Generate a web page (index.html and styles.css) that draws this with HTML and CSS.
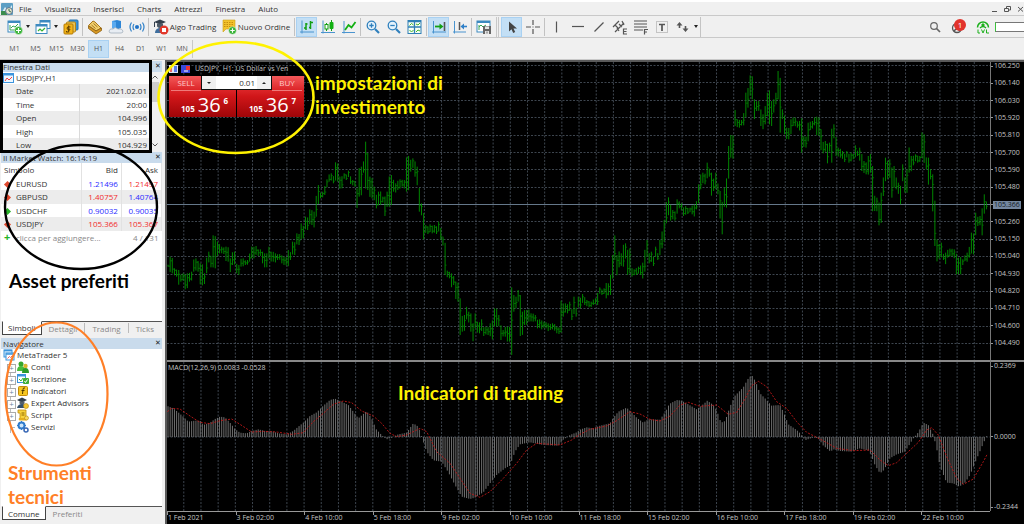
FILE: index.html
```html
<!DOCTYPE html>
<html lang="it">
<head>
<meta charset="utf-8">
<title>MetaTrader 5</title>
<link rel="stylesheet" href="styles.css">
</head>
<body>
<header class="menubar">
  <svg class="app-logo" width="12" height="12" viewBox="0 0 12 12"><rect width="12" height="12" rx="1" fill="#5d9fc4"/><path d="M1 9l3-5 3 3 4-5v8z" fill="#d9edf4"/><path d="M0 8h6v4H0z" fill="#3b8c4c"/><circle cx="8" cy="8" r="3.4" fill="#e9e4cd" stroke="#55708a"/><path d="M8 6v2l2 1" fill="none" stroke="#375"/></svg>
  <nav class="menus">
    <button>File</button><button>Visualizza</button><button>Inserisci</button><button>Charts</button><button>Attrezzi</button><button>Finestra</button><button>Aiuto</button>
  </nav>
  <div class="window-controls">
    <button aria-label="Riduci"><svg width="7" height="8" viewBox="0 0 7 8"><path d="M1 6.500h5" stroke="#555" fill="none"/></svg></button>
    <button aria-label="Ripristina"><svg width="7" height="8" viewBox="0 0 7 8"><path d="M.5 3.500h4v3h-4zM2.500 3V1.500h4v3.500H5" stroke="#555" fill="none"/></svg></button>
    <button aria-label="Chiudi"><svg width="7" height="8" viewBox="0 0 7 8"><path d="M1 2l5 4.500M6 2L1 6.500" stroke="#555" fill="none"/></svg></button>
  </div>
</header>

<div class="toolbar">
  <button class="tool drop" aria-label="Nuovo grafico"><svg width="16" height="16" viewBox="0 0 16 16"><rect x="1" y="2" width="12" height="11" fill="#fff" stroke="#3c8ac0"/><path d="M1 3h12" stroke="#3c8ac0" stroke-width="2"/><path d="M3 6v5h7M4 9l2-2 2 1 3-3" fill="none" stroke="#37a556"/><circle cx="11.500" cy="11.500" r="4" fill="#35b234" stroke="#dff4df" stroke-width=".6"/><path d="M11.500 9v5M9 11.500h5" stroke="#fff" stroke-width="1.200"/></svg><i class="caret"></i></button>
  <button class="tool drop" aria-label="Profili"><svg width="16" height="16" viewBox="0 0 16 16"><rect x="5" y="1.500" width="10" height="8" fill="#fff" stroke="#3c8ac0"/><path d="M5 2.500h10" stroke="#3c8ac0" stroke-width="2"/><rect x="1" y="5.500" width="11" height="9" fill="#fff" stroke="#3c8ac0"/><path d="M1 6.500h11" stroke="#3c8ac0" stroke-width="2"/><path d="M3 12l2-2 2 2 3-3" fill="none" stroke="#35b234" stroke-width="1.200"/></svg><i class="caret"></i></button>
  <button class="tool" aria-label="Simboli"><svg width="16" height="16" viewBox="0 0 16 16"><rect x="6" y="1" width="9" height="10" rx="1" fill="#3b93d8" stroke="#2470ac"/><rect x="3.500" y="3" width="9" height="10" rx="1" fill="#e9c456" stroke="#b88512"/><rect x="1" y="5" width="9" height="10" rx="1" fill="#f2b419" stroke="#b37a07"/><path d="M7.500 8Q4 7 4 9t2 1.200T5.500 12 3.500 12M5.700 6.500v7" fill="none" stroke="#5e3d00"/></svg></button>
  <i class="sep"></i>
  <button class="tool" aria-label="Strategia"><svg width="16" height="16" viewBox="0 0 16 16"><path d="M1.500 6.500L6 2l2 1 6 6-5 3z" fill="#f1cf6c" stroke="#a8761a"/><path d="M1.500 7v2.500L9 15l5.500-3.500V9L9 12z" fill="#d99a24" stroke="#8b5e12" stroke-width=".8"/><path d="M4.500 6l4 3.500M6.500 4.500l4 3.500" stroke="#8b5e12" stroke-width=".8"/></svg></button>
  <button class="tool" aria-label="Cloud"><svg width="16" height="16" viewBox="0 0 16 16"><path d="M4 2l5-1 4 1v7l-5 2-4-2z" fill="#2e86d6"/><path d="M4 2l4 1v8l-4-2z" fill="#5aaaf0"/><path d="M1 12q1-3 4-2 2-3 5 0 4-1 5 2 0 2-2 2H3q-2 0-2-2z" fill="#e8edf3" stroke="#9aa8b5" stroke-width=".7"/></svg></button>
  <button class="tool" aria-label="Segnali"><svg width="16" height="16" viewBox="0 0 16 16" fill="none" stroke="#2f80c8" stroke-width="1.200"><circle cx="8" cy="8" r="1.500" fill="#1b64c8"/><path d="M5 5q-2 3 0 6M2.500 3.500q-3 4.500 0 9M11 5q2 3 0 6M13.500 3.500q3 4.500 0 9"/></svg></button>
  <i class="sep"></i>
  <button class="tool wide algo"><svg width="16" height="16" viewBox="0 0 16 16"><path d="M1 3l6-2.500L13 3 7 5.500z" fill="#333f4c"/><path d="M4 4.500h6v3q-3 3-6 0z" fill="#4e5b68"/><path d="M1.500 3v5" stroke="#333f4c"/><path d="M2 14q0-4 4-5h4v5z" fill="#3f6f9e"/><circle cx="11" cy="11" r="4.500" fill="#e2392b"/><rect x="9" y="9" width="4" height="4" fill="#fff"/></svg>Algo Trading</button>
  <button class="tool wide order"><svg width="15" height="16" viewBox="0 0 15 16"><path d="M1 1h12v9H4l-3 3z" fill="#f3c32c" stroke="#caa01c" stroke-width=".6"/><path d="M2 3.500h10M2 5.500h10M2 7.500h10" stroke="#c68e0e" stroke-dasharray="1.500 1"/><circle cx="10.500" cy="11.500" r="3.800" fill="#35b234" stroke="#e8f6e8" stroke-width=".5"/><path d="M10.500 9.300v4.400M8.300 11.500h4.400" stroke="#fff" stroke-width="1.200"/></svg>Nuovo Ordine</button>
  <i class="sep"></i>
  <button class="tool on" aria-label="Barre"><svg width="16" height="16" viewBox="0 0 16 16" fill="none"><path d="M3 1.500v13M1 13h14" stroke="#4a94cf"/><path d="M7 4v7M5 9h2M7 5h1.500M11.500 2v8M10 8.500h1.500M11.500 3.500H14" stroke="#12a012" stroke-width="1.500"/></svg></button>
  <button class="tool" aria-label="Candele"><svg width="16" height="16" viewBox="0 0 16 16" fill="none"><path d="M3 1.500v13M1 13.500h14" stroke="#4a94cf"/><path d="M6.500 4v8M11.500 1v11" stroke="#12a012"/><rect x="5" y="5.500" width="3" height="4.500" fill="#fff" stroke="#12a012"/><rect x="9.500" y="3" width="4" height="7" rx="1" fill="#12b012"/></svg></button>
  <button class="tool" aria-label="Linea"><svg width="16" height="16" viewBox="0 0 16 16" fill="none"><path d="M3 2v12.500M1 13.500h13" stroke="#4a94cf"/><path d="M4 11l3.500-5 3 2.500 4-5.500" stroke="#12b012" stroke-width="1.800"/></svg></button>
  <i class="sep"></i>
  <button class="tool" aria-label="Ingrandisci"><svg width="16" height="16" viewBox="0 0 16 16" fill="none" stroke="#2f80bd"><circle cx="6.500" cy="6.500" r="4.300" fill="#e4f2fc" stroke-width="1.300"/><path d="M10 10l4 4" stroke-width="2.200"/><path d="M4.300 6.500h4.400M6.500 4.300v4.400" stroke-width="1.300"/></svg></button>
  <button class="tool" aria-label="Riduci zoom"><svg width="16" height="16" viewBox="0 0 16 16" fill="none" stroke="#2f80bd"><circle cx="6.500" cy="6.500" r="4.300" fill="#e4f2fc" stroke-width="1.300"/><path d="M10 10l4 4" stroke-width="2.200"/><path d="M4.300 6.500h4.400" stroke-width="1.300"/></svg></button>
  <button class="tool" aria-label="Affianca"><svg width="16" height="16" viewBox="0 0 16 16"><rect x="1" y="1.500" width="13" height="13" fill="#f8fff4" stroke="#2f7fb5"/><path d="M7.500 1v13M1 8h13M1 2.500h13" stroke="#2f7fb5" stroke-width="1.300"/><path d="M2.500 6.500l2-2 2 1.500M9 5l2 1 2-2M2.500 11l2 2 2-2M9 13l2-2 2 1" fill="none" stroke="#42b52c"/></svg></button>
  <i class="sep"></i>
  <button class="tool on" aria-label="Scorrimento automatico"><svg width="16" height="16" viewBox="0 0 16 16" fill="none"><path d="M2.500 2v12.500M1 13h14" stroke="#4a94cf" /><path d="M4 7.500h6" stroke="#12a012" stroke-width="1.800"/><path d="M8.500 4.500l4 3-4 3z" fill="#12a012"/><path d="M13.500 3v9" stroke="#555" stroke-width="1.600"/></svg></button>
  <button class="tool" aria-label="Spostamento grafico"><svg width="16" height="16" viewBox="0 0 16 16" fill="none"><path d="M2.500 2v12.500M1 13h13" stroke="#4a94cf"/><path d="M7.500 3v8" stroke="#555" stroke-width="1.500"/><path d="M11 7.500h4" stroke="#2f80c8" stroke-width="1.600"/><path d="M12 4.500l-3.500 3 3.500 3z" fill="#2f80c8"/></svg></button>
  <i class="sep"></i>
  <button class="tool" aria-label="Modelli"><svg width="16" height="16" viewBox="0 0 16 16"><rect x="1" y="2" width="13" height="11" fill="#fff" stroke="#3c8ac0"/><path d="M1 3h13" stroke="#3c8ac0" stroke-width="2"/><path d="M3 6v5M3 8l2-2 2 2 3-2" fill="none" stroke="#37a556"/><rect x="7" y="7" width="8" height="8" fill="#666"/><path d="M9 7.500h4v2.500H9zM9 15v-3h4v3" fill="#e5e5e5"/><path d="M11 12.500v2" stroke="#666"/></svg></button>
  <i class="grip"></i>
  <button class="tool on" aria-label="Cursore"><svg width="16" height="16" viewBox="0 0 16 16"><path d="M5 2.500v10l2.500-2.200 1.700 3.700 2-.9-1.700-3.600H13z" fill="#444"/></svg></button>
  <button class="tool" aria-label="Croce"><svg width="16" height="16" viewBox="0 0 16 16"><path d="M8 1v5M8 10v5M1 8h5M10 8h5M7.500 8h1" stroke="#555" stroke-width="1.200"/></svg></button>
  <i class="sep"></i>
  <button class="tool" aria-label="Linea verticale"><svg width="16" height="16" viewBox="0 0 16 16"><path d="M7.500 2.500v11" stroke="#555" stroke-width="1.200"/></svg></button>
  <button class="tool" aria-label="Linea orizzontale"><svg width="16" height="16" viewBox="0 0 16 16"><path d="M2 7.500h12" stroke="#555" stroke-width="1.200"/></svg></button>
  <button class="tool" aria-label="Linea di tendenza"><svg width="16" height="16" viewBox="0 0 16 16"><path d="M3.500 12.500l9-9" stroke="#555" stroke-width="1.300"/></svg></button>
  <button class="tool" aria-label="Canale"><svg width="16" height="16" viewBox="0 0 16 16" fill="none" stroke="#555" stroke-width="1.200"><path d="M1 8l6-6M3 13l9-9M3 6l3 3M7 5l3 3M5 9l2 3M10 2l2 4M15 10h-3.500v5H15M12 12.500h2.500"/></svg></button>
  <button class="tool" aria-label="Fibonacci"><svg width="16" height="16" viewBox="0 0 16 16" fill="none" stroke="#555" stroke-width="1.200"><path d="M1 2h13M1 5h13M1 8h13M1 11h9M11.500 15.500v-5H15M11.500 13H14"/></svg></button>
  <button class="tool" aria-label="Testo"><svg width="16" height="16" viewBox="0 0 16 16" fill="none" stroke="#555"><rect x="2.500" y="2.500" width="11" height="11" stroke="#999" stroke-dasharray="1 1"/><path d="M5 5.500h6M8 5.500V12" stroke-width="1.700"/></svg></button>
  <button class="tool drop last" aria-label="Frecce"><svg width="16" height="16" viewBox="0 0 16 16" fill="#555"><path d="M4.500 3l3 3.500H5.300V9H3.700V6.500H1.500zM10.500 13l3-3.500h-2.200V7H9.700v2.500H7.500z"/></svg><i class="caret"></i></button>
  <div class="status">
    <button aria-label="Cerca"><svg width="14" height="16" viewBox="0 0 14 16" fill="none" stroke="#666"><circle cx="6" cy="7" r="3.300" stroke-width="1.200"/><path d="M8.500 9.500l3.500 3.500" stroke-width="1.700"/></svg></button>
    <button class="user" aria-label="Notifiche"><svg width="12" height="14" viewBox="0 0 12 14" fill="none" stroke="#555" stroke-width="1.300"><circle cx="6" cy="8" r="4.500"/><path d="M3 11q3-4 6 0"/><circle cx="6" cy="6.500" r="1.500"/></svg><span class="badge">1</span></button>
    <button aria-label="Livello"><svg width="14" height="16" viewBox="0 0 14 16" fill="none" stroke="#1cb01c" stroke-width="1.500"><path d="M1.500 8.500a5.500 5.500 0 1 1 11 0"/><path d="M7 4l2 2-2 2-2-2z" fill="#1cb01c" stroke="none"/><path d="M4 9q3-3 6 0" stroke-width="1.300"/><path d="M2 10.500V14h2M5.500 10.500L7 14l1.500-3.500M10.500 10.500V14H13" stroke-width="1"/></svg></button>
    <span class="level"></span>
  </div>
</div>

<div class="timeframes">
  <button>M1</button><button>M5</button><button>M15</button><button>M30</button><button class="on">H1</button><button>H4</button><button>D1</button><button>W1</button><button>MN</button>
</div>

<main class="workspace">
  <aside class="sidebar">
    <section class="panel data-window">
      <h2 class="caption"><span>Finestra Dati</span><button aria-label="Chiudi">✕</button></h2>
      <div class="data-scroll">
        <div class="data-body">
          <p class="symbol"><svg width="11" height="11" viewBox="0 0 11 11"><rect x=".5" y=".5" width="10" height="9" fill="#eef7ff" stroke="#3b94dc"/><path d="M0 1.500h11" stroke="#3b94dc" stroke-width="2"/><path d="M2 8l2-3 2 2 3-3" stroke="#e44" fill="none"/></svg>USDJPY,H1</p>
          <table class="grid">
            <tr><th>Date</th><td>2021.02.01</td></tr>
            <tr><th>Time</th><td>20:00</td></tr>
            <tr><th>Open</th><td>104.996</td></tr>
            <tr><th>High</th><td>105.035</td></tr>
            <tr><th>Low</th><td>104.929</td></tr>
          </table>
        </div>
        <div class="scrollbar"><svg width="6" height="4" viewBox="0 0 6 4"><path d="M.5 3.500L3 1l2.500 2.500" fill="none" stroke="#555"/></svg><i></i><svg width="6" height="4" viewBox="0 0 6 4"><path d="M.5.5L3 3 5.500.5" fill="none" stroke="#555"/></svg></div>
      </div>
    </section>

    <section class="panel market">
      <h2 class="caption"><span>Il Market Watch: 16:14:19</span><button aria-label="Chiudi">✕</button></h2>
      <div class="content">
        <table class="quotes">
          <thead><tr><th>Simbolo</th><th>Bid</th><th>Ask</th></tr></thead>
          <tbody>
            <tr><th><i class="dir down"></i>EURUSD</th><td class="up">1.21496</td><td class="fall">1.21497</td></tr>
            <tr><th><i class="dir down"></i>GBPUSD</th><td class="fall">1.40757</td><td class="up">1.40764</td></tr>
            <tr><th><i class="dir rise"></i>USDCHF</th><td class="up">0.90032</td><td class="up">0.90035</td></tr>
            <tr><th><i class="dir down"></i>USDJPY</th><td class="fall">105.366</td><td class="fall">105.367</td></tr>
            <tr class="add"><th colspan="2"><b>+</b>clicca per aggiungere...</th><td>4 / 131</td></tr>
          </tbody>
        </table>
      </div>
      <div class="tabs"><button class="on">Simboli</button><button>Dettagli</button><button>Trading</button><button>Ticks</button></div>
    </section>

    <section class="panel navigator">
      <h2 class="caption"><span>Navigatore</span><button aria-label="Chiudi">✕</button></h2>
      <div class="content">
        <ul class="tree">
          <li class="root"><svg width="12" height="12" viewBox="0 0 12 12"><rect x="1" y="1" width="8" height="7" fill="#cfe8fb" stroke="#3b94dc"/><rect x="3" y="4" width="8" height="7" fill="#fff" stroke="#3b94dc"/><path d="M3 5h8M1 1.500h8" stroke="#3b94dc" stroke-width="1.500"/><path d="M4.500 9.500l2-2 1 1 2-2" stroke="#e66" fill="none"/></svg>MetaTrader 5</li>
          <li><i class="plus"></i><svg width="12" height="12" viewBox="0 0 12 12"><circle cx="4" cy="3" r="2.500" fill="#35a62c"/><path d="M0 10q0-5 4-5t4 5z" fill="#48bd3c"/><circle cx="8.500" cy="5" r="2.200" fill="#d9b42d"/><path d="M5 12q0-5 3.500-5T12 12z" fill="#2c9a28"/></svg>Conti</li>
          <li><i class="plus"></i><svg width="12" height="12" viewBox="0 0 12 12"><rect x=".5" y="1.500" width="8" height="8" fill="#fff" stroke="#3b94dc"/><path d="M0 2.500h9" stroke="#3b94dc" stroke-width="2"/><path d="M2 6l2 2 2-3" fill="none" stroke="#3b3"/><rect x="6" y="5" width="6" height="6" rx="1" fill="#41ad36"/><path d="M7.500 8l1 1.500 2-3" fill="none" stroke="#fff"/></svg>Iscrizione</li>
          <li><i class="plus"></i><svg width="12" height="12" viewBox="0 0 12 12"><rect x="1.500" y="1.500" width="9" height="9" rx="1" fill="#f6c620" stroke="#c28a08"/><path d="M8 3q-2-.8-2 1.500L5.500 9M4.500 5.500h3" fill="none" stroke="#503a00"/></svg>Indicatori</li>
          <li><i class="plus"></i><svg width="12" height="12" viewBox="0 0 12 12"><path d="M0 3l5-2.500L10 3 5 5.500z" fill="#33404d"/><path d="M2.500 4.500h5v2q-2.500 2-5 0z" fill="#55606b"/><path d="M0 11q1-4 5-4t4 4z" fill="#33506d"/><circle cx="9" cy="9" r="2.500" fill="#f3c632" stroke="#b68510" stroke-width=".6"/></svg>Expert Advisors</li>
          <li><i class="plus"></i><svg width="12" height="12" viewBox="0 0 12 12"><path d="M1 1h8v9H3V4H1z" fill="#f8d33b" stroke="#be8e0c" stroke-width=".8"/><path d="M4.500 4h3M4.500 6h3" stroke="#8d6600"/><path d="M2 9h8q1 2-1 2.500H3Q1 11 2 9z" fill="#e4ae1c"/><circle cx="9.500" cy="9" r="2" fill="#f9db62" stroke="#b68510" stroke-width=".6"/></svg>Script</li>
          <li class="leaf"><i class="plus"></i><svg width="12" height="12" viewBox="0 0 12 12"><circle cx="4.500" cy="4.500" r="3" fill="#cde5fa" stroke="#2f7bcb" stroke-width="2"/><path d="M4.500 0v9M0 4.500h9" stroke="#2f7bcb" stroke-dasharray="1.500 6"/><circle cx="9" cy="9" r="2" fill="#fff" stroke="#3767b5" stroke-width="1.500"/></svg>Servizi</li>
        </ul>
      </div>
      <div class="tabs"><button class="on">Comune</button><button>Preferiti</button></div>
    </section>
  </aside>

  <section class="chart">
    <svg id="price" class="plot" viewBox="167 62 823 298" preserveAspectRatio="none"></svg>
    <div class="axis price-axis">
      <span>106.250</span><span>106.140</span><span>106.030</span><span>105.920</span><span>105.810</span><span>105.700</span><span>105.590</span><span>105.480</span><span class="now">105.366</span><span>105.260</span><span>105.150</span><span>105.040</span><span>104.930</span><span>104.820</span><span>104.710</span><span>104.600</span><span>104.490</span>
    </div>
    <svg id="macd" class="plot lower" viewBox="167 362 823 149" preserveAspectRatio="none"></svg>
    <div class="axis macd-axis lower"><span>0.2369</span><span>0.0000</span><span>-0.2344</span></div>
    <div class="times">
      <span>1 Feb 2021</span><span>3 Feb 02:00</span><span>4 Feb 10:00</span><span>5 Feb 18:00</span><span>9 Feb 02:00</span><span>10 Feb 10:00</span><span>11 Feb 18:00</span><span>15 Feb 02:00</span><span>16 Feb 10:00</span><span>17 Feb 18:00</span><span>19 Feb 02:00</span><span>22 Feb 10:00</span>
    </div>
    <p class="macd-label">MACD(12,26,9) 0.0083 -0.0528</p>
    <div class="ticket">
      <p class="ticket-title"><svg width="22" height="9" viewBox="0 0 22 9"><rect x="0" y="0" width="9" height="8" fill="#dfe4f5"/><path d="M1 1h2v6H1z" fill="#e66"/><path d="M5 1h3v6H5z" fill="#5a7be8"/><rect x="12" y="0" width="9" height="8" fill="#3a49dc"/><path d="M17 1h4v4h-4z" fill="#e33"/><path d="M15 6h4" stroke="#fff"/></svg>USDJPY, H1: US Dollar vs Yen</p>
      <div class="deal">
        <button class="side sell"><span class="name">SELL</span><span class="quote"><b>105</b><em>36</em><sup>6</sup></span></button>
        <button class="side buy"><span class="name">BUY</span><span class="quote"><b>105</b><em>36</em><sup>7</sup></span></button>
        <div class="volume"><button aria-label="Meno"><i class="tri"></i></button><input aria-label="Volume" value="0.01"><button aria-label="Più"><i class="tri upward"></i></button></div>
      </div>
    </div>
  </section>
</main>

<div class="notes">
  <svg width="460" height="524" viewBox="0 0 460 524" fill="none">
    <rect x="1.500" y="61.500" width="149" height="90" stroke="#000" stroke-width="3"/>
    <ellipse cx="81" cy="207" rx="76" ry="62" stroke="#000" stroke-width="2.400"/>
    <ellipse cx="56.500" cy="394" rx="51" ry="71.500" stroke="#ff7f27" stroke-width="2.200"/>
    <ellipse cx="236" cy="97.500" rx="77.500" ry="55.500" stroke="#fff200" stroke-width="2.600"/>
  </svg>
  <p class="note invest">impostazioni di<br>investimento</p>
  <p class="note assets">Asset preferiti</p>
  <p class="note tools">Strumenti<br>tecnici</p>
  <p class="note indicators">Indicatori di trading</p>
</div>
<script src="chart.js"></script>
</body>
</html>
```
FILE: styles.css
```css
* { box-sizing: border-box; }
body {
  margin: 0;
  height: 100vh;
  display: flex;
  flex-direction: column;
  overflow: hidden;
  position: relative;
  background: #f0f0f0;
  color: #333;
  font: 8px/12px "Open Sans", "Noto Sans", sans-serif;
}
button { margin: 0; padding: 0; border: 0; background: none; color: inherit; font: inherit; white-space: nowrap; }
p, h2, ul { margin: 0; padding: 0; font: inherit; list-style: none; }
svg { display: block; flex: none; }
table { border-collapse: collapse; width: 100%; }
th { font-weight: normal; text-align: left; }

.menubar { display: flex; align-items: center; height: 16px; border-top: 2px solid #fff; border-bottom: 1px solid #c9c9c9; padding-left: 1px; }
.menus { display: flex; gap: 13px; margin-left: 6px; }
.window-controls { display: flex; gap: 6px; margin-left: auto; }

.toolbar { display: flex; align-items: center; height: 22px; padding-left: 4px; border-bottom: 1px solid #c9c9c9; }
.tool { width: 21px; height: 20px; display: flex; align-items: center; justify-content: center; }
.tool.on, .timeframes .on { background: #c3dff5; outline: 1px solid #a9d1f2; outline-offset: -1px; }
.tool.drop { width: 28px; gap: 3px; }
.tool.last { width: 29px; border-right: 1px solid #c4c4c4; }
.tool.wide { gap: 1px; }
.tool.algo { width: 69px; }
.tool.order { width: 74px; }
.caret { border: 2px solid transparent; border-top: 3px solid #222; border-bottom: 0; }
.sep { width: 1px; height: 18px; margin: 0 1px; background: #c2c2c2; }
.grip { width: 3px; height: 20px; margin: 0 2px; border: 1px solid #c8c8c8; border-width: 0 1px; }
.status { display: flex; align-items: center; gap: 9px; margin-left: auto; }
.user { position: relative; width: 16px; }
.badge { position: absolute; left: 3px; top: -1px; width: 12px; height: 12px; border-radius: 50%; background: #e2332b; color: #fff; }
.level { width: 29px; height: 10px; background: #fff; border: 1px solid #777; border-left-color: #3cc23c; border-right: 0; margin-left: -4px; }

.timeframes { display: flex; height: 22px; padding: 2px 0 1px 4px; border-bottom: 1px solid #c9c9c9; font-size: 7px; color: #555; }
.timeframes button { width: 21px; }
.timeframes button:last-child { border-right: 1px solid #c9c9c9; }

.workspace { flex: 1; min-height: 0; display: flex; }
.sidebar { width: 165px; display: flex; flex-direction: column; padding: 0 3px 4px 1px; }
.panel { display: flex; flex-direction: column; }
.caption { display: flex; justify-content: space-between; align-items: center; height: 11px; padding-left: 2px; line-height: 11px; background: #c9dbec; }
.caption button { width: 8px; font: 7px/11px "DejaVu Sans", sans-serif; color: #222; }

.data-window { height: 92px; padding-top: 1px; }
.data-scroll { flex: 1; min-height: 0; display: flex; overflow: hidden; background: #fff; }
.data-body { flex: 1; }
.symbol { display: flex; align-items: center; gap: 2px; height: 12px; padding-left: 2px; }
.grid tr { height: 14px; }
.grid tr:nth-child(even) { height: 13px; }
.grid tr:nth-child(odd), .quotes tbody tr:nth-child(even) { background: #ececec; }
.grid th, .grid td { padding: 0 4px 0 14px; border-left: 1px solid #dadada; }
.grid th { width: 53%; }
.grid td { padding: 0 2px 0 0; text-align: right; }
.scrollbar { width: 13px; display: flex; flex-direction: column; align-items: center; padding: 3px 2px 5px 0; background: #f0f0f0; }
.scrollbar i { width: 8px; height: 20px; margin: 3px 0 auto; background: #cdcdcd; }

.market, .navigator { flex: 1; min-height: 0; }
.content { flex: 1; min-height: 0; background: #fff; }
.quotes { table-layout: fixed; }
.quotes tr { height: 13px; }
.quotes tbody tr:nth-child(even) { height: 14px; }
.quotes thead th { height: 14px; }
.quotes th, .quotes td { padding: 0 3px; white-space: nowrap; border-right: 1px solid #e2e2e2; }
.quotes thead th:first-child { width: 50%; }
.quotes thead th:nth-child(n+2), .quotes td { text-align: right; }
.quotes .up { color: #2b2bff; }
.quotes .fall { color: #f22b2b; }
.quotes .add { background: #fff; color: #888; }
.quotes .add b { display: inline-block; width: 12px; color: #25b325; font-size: 11px; line-height: 8px; }
.quotes .add th, .quotes .add td { border: 0; text-align: right; }
.quotes .add th { text-align: left; }
.dir { display: inline-block; width: 5px; height: 5px; margin: 0 6px 0 1px; transform: rotate(45deg); background: #e0492e; }
.dir.rise { background: #29b329; }

.tabs { display: flex; height: 14px; margin-left: 1px; border-top: 1px solid #555; color: #888; }
.tabs button { padding: 0 7px; border-right: 1px solid #bbb; margin: 1px 0 2px; line-height: 11px; }
.tabs button:last-child { border-right-color: transparent; }
.tabs .on { margin: -1px 0 0; padding: 0 5px; border: 1px solid #444; border-top-color: #fff; background: #fff; color: #333; }
.navigator { margin-top: 3px; }

.tree { padding: 0 2px; }
.tree li { display: flex; align-items: center; gap: 2px; height: 12px; padding-left: 4px; }
.tree .root { padding-left: 0; }
.plus { position: relative; width: 8px; height: 12px; flex: none; background: linear-gradient(#bbb, #bbb) 3px 0/1px 12px no-repeat, linear-gradient(#bbb, #bbb) 3px 6px/5px 1px no-repeat; }
.plus::before { content: "+"; position: absolute; left: 0; top: 3px; width: 7px; height: 7px; border: 1px solid #aaa; background: #fff; color: #6b7fa0; font: 6px/5px "DejaVu Sans", sans-serif; text-align: center; }
.leaf .plus::before { display: none; }

.chart { flex: 1; min-width: 0; position: relative; display: grid; grid-template: 298fr 151fr 13px / 1fr 34px; background: #000; border: solid #5a5a5a; border-width: 2px 0 0 2px; color: #c4c4c4; font: 7px/8px "Open Sans", "Noto Sans", sans-serif; }
.plot { width: 100%; height: 100%; min-height: 0; }
.lower { border-top: 2px solid #888; }
.axis { display: flex; flex-direction: column; justify-content: space-between; border-left: 1px solid #777; }
.axis span { display: flex; align-items: center; gap: 1px; }
.axis span::before { content: ""; width: 2px; height: 1px; background: #999; }
.price-axis { padding-bottom: 13px; }
.axis .now { background: linear-gradient(#7487a0, #7487a0) 2px 0/28px 8px no-repeat; color: #121a24; }
.times { grid-column: 1 / -1; display: grid; grid-template-columns: repeat(12, 1fr); margin-right: 34px; border-top: 1px solid #999; }
.times span { border-left: 1px solid #999; line-height: 12px; height: 3px; white-space: nowrap; }
.macd-label { position: absolute; left: 1px; top: 302px; }

.ticket { position: absolute; left: 2px; top: 2px; }
.ticket-title { display: flex; align-items: center; gap: 4px; height: 10px; }
.deal { position: relative; display: grid; grid-template-columns: 67px 67px; gap: 1px; margin-top: 2px; }
.side { display: flex; flex-direction: column; height: 41px; padding: 0 2px; background: linear-gradient(#f4595a, #dc2528 14px, #d01619 50%, #9e0508); color: #fff; }
.side .name { height: 15px; width: 30px; color: #ffcaca; line-height: 14px; font-size: 8px; border-bottom: 1px solid #ef7a7a; }
.side.buy .name { align-self: flex-end; }
.quote { display: flex; width: 100%; height: 26px; padding: 2px 0 0 10px; gap: 3px; align-items: center; }
.quote b { font: bold 8px/8px "Open Sans", sans-serif; padding-top: 7px; }
.quote em { font: normal 20px/24px "Open Sans", sans-serif; }
.quote sup { font: bold 8px/8px "Open Sans", sans-serif; padding-bottom: 9px; }
.volume { position: absolute; left: 32px; right: 32px; top: 0; display: flex; height: 14px; border: 1px solid #111; border-top: 0; background: #f0f0f0; }
.volume button { width: 14px; display: flex; align-items: center; justify-content: center; }
.volume input { flex: 1; min-width: 0; border: 0; padding: 0 2px; text-align: right; font: 8px/13px "Open Sans", sans-serif; color: #333; background: #fff; }
.tri { border: 2px solid transparent; border-top-color: #222; border-bottom: 0; }
.tri.upward { border: 2px solid transparent; border-bottom-color: #222; border-top: 0; }

.notes { position: absolute; left: 0; top: 0; pointer-events: none; }
.note { position: absolute; white-space: nowrap; font: bold 19px/24px Lato, sans-serif; }
.invest { left: 315px; top: 71px; color: #fff200; }
.assets { left: 9px; top: 269px; color: #000; }
.tools { left: 8px; top: 461px; color: #ff7f27; }
.indicators { left: 398px; top: 381px; color: #fff200; }
```
FILE: chart.js
```js
// Samples are stored at three units per pixel, relative to each segment's origin.
const parse = (ox, oy, text) => text.trim().split(/\s+/).map(item => {
  const [x, ...values] = item.split(",").map(Number);
  return [ox + x / 3, ...values.map(v => oy + v / 3)];
});

const range = [
  ...parse(160, 130, `24,400,410 32,380,430 45,415,440 58,420,468 66,430,455 78,430,478 90,425,455 104,385,425 116,390,425 124,400,466 132,430,465 140,380,430 148,365,400 155,375,412 162,316,415 170,335,380 180,340,370 190,350,372 200,350,395 210,385,428 220,365,405 230,400,430 238,405,436 248,385,410 258,390,405 270,370,395 278,350,385 288,348,375 300,358,378 310,365,400 317,370,412 325,350,385 335,365,395 345,370,398 355,372,390 365,375,400 375,380,406 383,360,410 392,365,390 400,335,375 412,310,345 425,280,330 432,285,325 440,260,300 452,238,285 462,245,295 470,195,260 477,165,225 485,185,205 492,165,195 500,148,175 512,130,155 523,135,160 530,97,155 538,140,180 545,135,175 555,130,150 563,122,145 572,135,162 582,150,170 588,165,238 594,175,238 600,110,200 610,90,128 618,35,180 626,65,180 633,140,205 640,170,215 648,190,235 656,185,230 663,180,225 670,200,222 677,195,258 684,185,235 690,135,230 700,145,185 708,160,192 716,148,180 726,145,170 735,150,180 742,78,185 750,85,125 758,85,118 766,90,140 773,110,170 780,170,245 786,220,260 793,245,328 800,285,312 812,283,310 825,285,312 838,275,308`),
  ...parse(440, 180, `4,140,180 10,170,200 18,185,285 25,272,295 32,280,325 40,285,315 48,305,360 55,305,365 62,355,468 70,405,455 77,378,418 85,395,430 93,398,455 101,430,486 108,398,445 115,425,460 122,418,455 130,440,468 140,440,465 150,430,470 158,420,478 166,385,440 174,405,440 180,435,480 188,450,470 198,440,470 206,440,485 212,440,528 217,322,525 223,345,395 230,350,385 237,330,365 244,345,468 250,395,465 257,390,435 265,388,425 275,400,425 285,405,425 295,418,445 305,420,448 315,425,445 325,430,455 335,430,450 345,430,452 355,440,462 365,362,460 372,368,410 380,370,400 390,365,395 397,385,420 404,350,405 411,380,410 418,350,385 426,342,372 435,348,375 445,360,382 455,365,385 463,355,375 470,335,375 480,322,345 490,325,345 500,305,355 508,310,350 514,280,345 520,225,300 526,162,240 533,225,290 540,210,262 547,220,262 553,190,260 560,190,240 566,205,285 574,260,290 582,268,290 592,260,285 602,252,285 611,248,300 617,205,275 623,180,235 632,215,250 640,225,258 650,200,235 656,215,240 662,180,230 668,150,205 676,120,190 682,62,130 688,52,110 694,70,122 702,90,122 708,58,105 716,60,85 726,70,95 735,78,108 745,80,102`),
  ...parse(690, 56, `0,455,472 8,445,475 15,445,485 22,432,460 28,385,445 35,352,400 42,350,385 50,320,370 55,335,362 61,350,422 68,365,405 75,350,402 82,380,415 88,405,490 94,440,505 98,435,535 103,395,455 108,365,455 113,270,370 120,235,305 127,238,310 132,205,300 138,160,210 145,190,215 152,192,210 158,170,208 165,110,185 171,95,155 177,40,135 183,58,120 189,60,130 196,130,190 203,135,165 210,160,210 217,175,220 224,150,205 230,110,180 236,103,205 242,135,210 248,145,180 254,130,170 260,110,145 267,45,130 273,65,230 279,160,190 286,178,235 293,215,250 300,190,235 306,183,210 314,185,212 322,195,215 330,195,225 337,185,290 344,240,275 352,200,258 360,195,222 368,195,220 376,182,208 384,182,240 390,220,285 397,255,292 405,255,290 410,260,322 416,260,290 422,280,332 428,215,320 433,205,250 440,240,300 448,275,305 456,285,312 464,290,318 472,285,308 480,290,320 488,290,310 495,268,308 503,280,300 511,275,318 518,290,345 525,315,355 532,300,360 538,290,350 545,330,470 552,415,465 560,425,470 568,435,508 575,410,505 582,360,420 589,305,380 596,310,370 603,330,425 610,330,400 617,360,400 624,380,418 632,385,445 640,325,380 646,360,410 653,340,415 659,270,350 665,300,350 672,295,328 680,295,320 688,300,322 693,225,305 699,220,270 705,235,325 711,300,340 718,305,390 724,335,370 730,355,470 736,430,570 742,550,620 750,560,608 760,590,612 768,590,628 776,578,605 784,575,600 790,580,610 796,590,655 803,605,658 810,600,655 817,610,630 824,595,615 832,590,620 840,570,605 848,530,595 854,495,570 860,470,540 866,480,510 873,480,510 879,455,538 885,415,475 892,435,460`)
];

const histogram = [
  ...parse(160, 355, `22,153 40,160 55,172 70,185 85,200 105,197 120,197 130,210 150,203 165,192 180,185 195,187 210,203 225,222 240,233 260,235 275,228 295,223 315,228 335,228 355,235 380,238 400,228 415,215 430,203 450,183 470,172 490,152 510,135 525,131 545,140 565,150 580,170 595,190 610,177 620,168 635,190 648,222 665,240 680,253 695,248 715,238 740,233 760,205 775,215 790,260 800,290 820,316 845,320 865,352 885,390 905,425 930,432 945,428 970,412 990,385 1010,360 1035,340 1050,332 1065,290 1080,268 1110,262 1150,270 1195,272 1210,254 1230,240 1250,232`),
  ...parse(580, 355, `0,224 20,217 40,220 60,212 90,205 100,188 115,170 140,158 155,172 170,188 190,203 205,193 240,194 255,172 268,147 290,135 305,137 325,148 350,163 365,152 382,137 400,150 410,165 420,195 430,205 440,185 450,155 465,122 490,97 503,73 515,60 527,80 540,115 555,130 575,152 600,150 612,175 625,208 650,225 662,236 675,256 700,247 715,250 730,272 752,290 760,283 780,288 815,290 840,280 868,288 885,330 900,355 912,345 930,310 950,298 975,290 1000,250 1015,232 1030,203 1045,210 1060,240 1070,280 1080,335 1100,383 1120,385 1138,395 1155,383 1170,360 1190,312 1210,265 1222,238`)
];

const signal = [
  ...parse(160, 355, `22,170 35,160 60,162 90,183 120,202 150,206 180,197 215,192 240,208 275,231 310,229 350,231 395,238 430,233 460,200 490,175 520,148 550,138 575,143 605,168 640,183 665,205 690,235 710,245 740,240 780,220 800,230 830,290 870,325 900,370 930,415 960,427 990,410 1030,370 1070,325 1100,285 1130,265 1200,270 1235,255`),
  ...parse(580, 355, `0,238 30,223 80,213 110,197 150,170 180,177 210,193 240,198 270,183 300,150 325,142 360,154 410,150 445,178 470,172 495,132 515,92 535,79 560,95 590,140 620,160 650,200 680,232 720,252 770,280 820,287 870,285 900,315 925,332 950,323 985,290 1015,262 1040,225 1055,218 1075,240 1100,305 1130,370 1150,388 1180,372 1210,320 1222,297`)
];

const path = (d, attrs) => `<path d="${d}" fill="none" ${attrs}/>`;
const nearest = (list, x) => list.reduce((a, b) => Math.abs(b[0] - x) < Math.abs(a[0] - x) ? b : a);
const level = (list, x) => {
  const i = Math.max(1, list.findIndex(p => p[0] >= x));
  const [a, b] = [list[i - 1], list[i]];
  return a[1] + (b[1] - a[1]) * (x - a[0]) / (b[0] - a[0]);
};

const step = 17.185;
let columns = "", rows = "", bars = "", ticks = "", columnsLow = "", hist = "";
for (let x = 166.6 + step; x < 990; x += step) {
  columns += `M${x} 62V360`;
  columnsLow += `M${x} 362V511`;
}
for (let i = 0; i < 17; i++) rows += `M167 ${Math.round(65 + i * 17.375) + 0.5}H990`;

let previous = null;
for (let x = 168; x < 988; x += step / 8) {
  const [, high, low] = nearest(range, x);
  const wobble = Math.sin(x * 7.3);
  const top = high + Math.max(0, wobble) * 1.5;
  const bottom = low - Math.max(0, -wobble) * 1.5;
  const close = (top + bottom) / 2 + wobble * (bottom - top) / 4;
  bars += `M${x} ${top}V${bottom}`;
  ticks += `M${x} ${close}h1.500`;
  if (previous !== null && previous > top && previous < bottom) ticks += `M${x - 1.2} ${previous}h1.200`;
  previous = close;
  hist += `M${x} 437V${level(histogram, x)}`;
}

const gridStyle = 'stroke="#4c5762" stroke-width=".8" stroke-dasharray="2 1.500"';
document.getElementById("price").innerHTML =
  path(columns, gridStyle) + path(rows, gridStyle) +
  path("M167 204.500H990", 'stroke="#65788a"') +
  path(bars, 'stroke="#009600" stroke-width=".9"') + path(ticks, 'stroke="#008000" stroke-width=".7"');
document.getElementById("macd").innerHTML =
  path(columnsLow, gridStyle) + path("M167 437H990", gridStyle) +
  path(hist, 'stroke="#7c7c7c" stroke-width=".9"') +
  path("M" + signal.map(p => p.join(" ")).join("L"), 'stroke="#c01818" stroke-width=".9" stroke-dasharray="2 1.500"');
```
